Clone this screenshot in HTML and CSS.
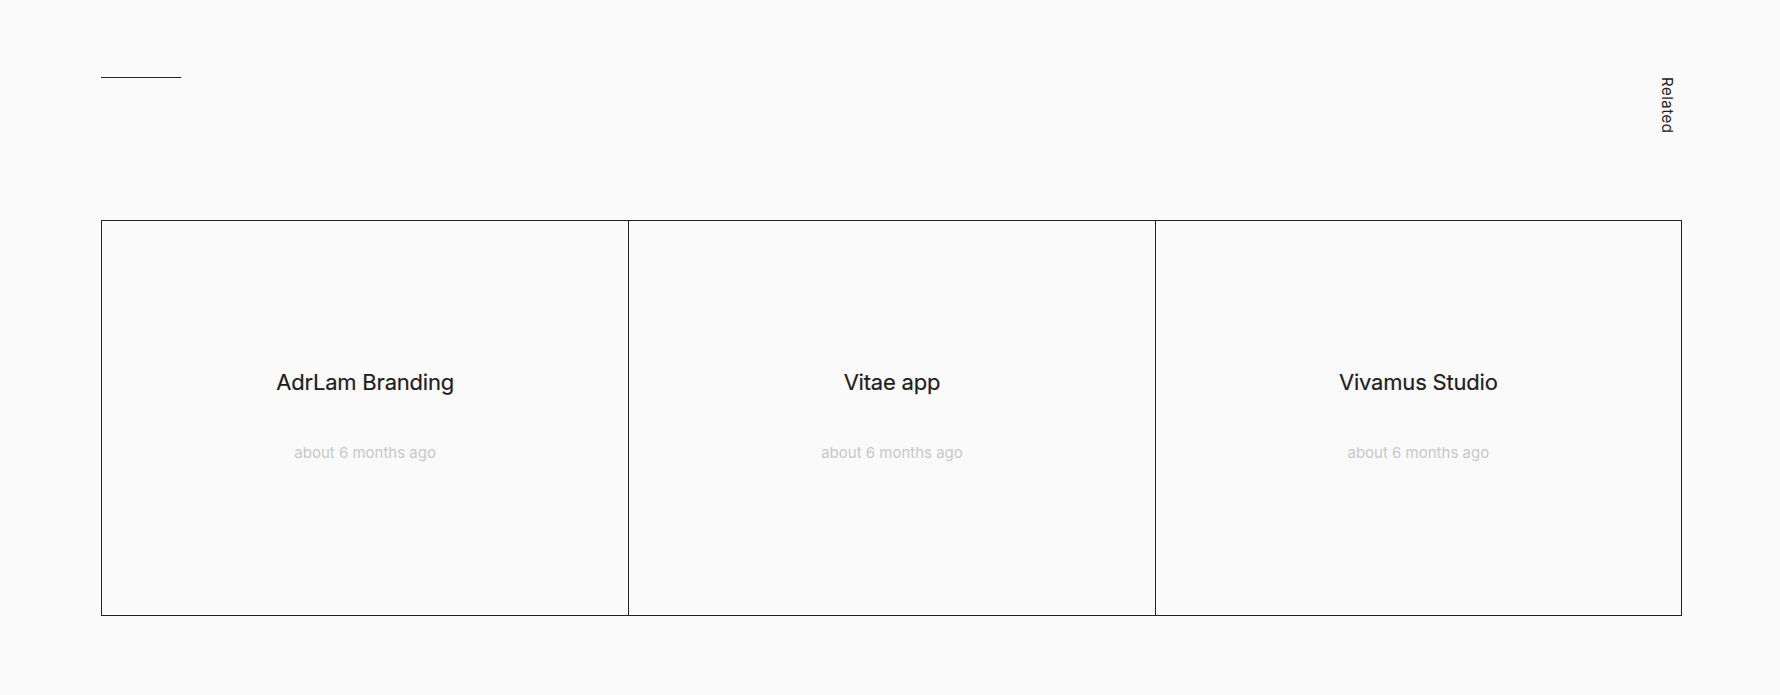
FILE: index.html
```html
<!DOCTYPE html>
<html lang="en">
<head>
<meta charset="utf-8">
<title>Related</title>
<link rel="stylesheet" href="styles.css">
</head>
<body>
<div class="page">
  <header class="top">
    <span class="rule"></span>
    <span class="side-label">Related</span>
  </header>
  <section class="related-grid">
    <a class="card" href="#">
      <h3 class="card-title">AdrLam Branding</h3>
      <span class="card-date">about 6 months ago</span>
    </a>
    <a class="card" href="#">
      <h3 class="card-title">Vitae app</h3>
      <span class="card-date">about 6 months ago</span>
    </a>
    <a class="card" href="#">
      <h3 class="card-title">Vivamus Studio</h3>
      <span class="card-date">about 6 months ago</span>
    </a>
  </section>
</div>
</body>
</html>
```

FILE: styles.css
```css
* { box-sizing: border-box; }
html, body {
  margin: 0;
  padding: 0;
  background: #fafafa;
}
body {
  font-family: "Inter", "Open Sans", sans-serif;
  color: #222;
}
.page {
  padding: 77px 105px 0 101px;
}
.top {
  display: flex;
  justify-content: space-between;
  align-items: flex-start;
  height: 143px;
}
.rule {
  display: block;
  width: 80px;
  height: 1px;
  background: #222;
}
.side-label {
  writing-mode: vertical-rl;
  font-size: 15px;
  line-height: 15px;
  letter-spacing: 0.5px;
  color: #222;
}
.related-grid {
  display: grid;
  grid-template-columns: repeat(3, 1fr);
  width: 1581px;
  height: 396px;
  border: 1px solid #222;
}
.card {
  display: flex;
  flex-direction: column;
  align-items: center;
  justify-content: center;
  padding-bottom: 7px;
  text-decoration: none;
  color: inherit;
}
.card + .card {
  border-left: 1px solid #222;
}
.card-title {
  margin: 0;
  font-size: 22px;
  font-weight: 400;
  line-height: 33px;
  color: #1e1e1e;
  letter-spacing: -0.2px;
  -webkit-text-stroke: 0.2px #1e1e1e;
}
.card-date {
  margin-top: 43px;
  font-size: 15px;
  line-height: 22px;
  color: #c8c8c8;
}
```
